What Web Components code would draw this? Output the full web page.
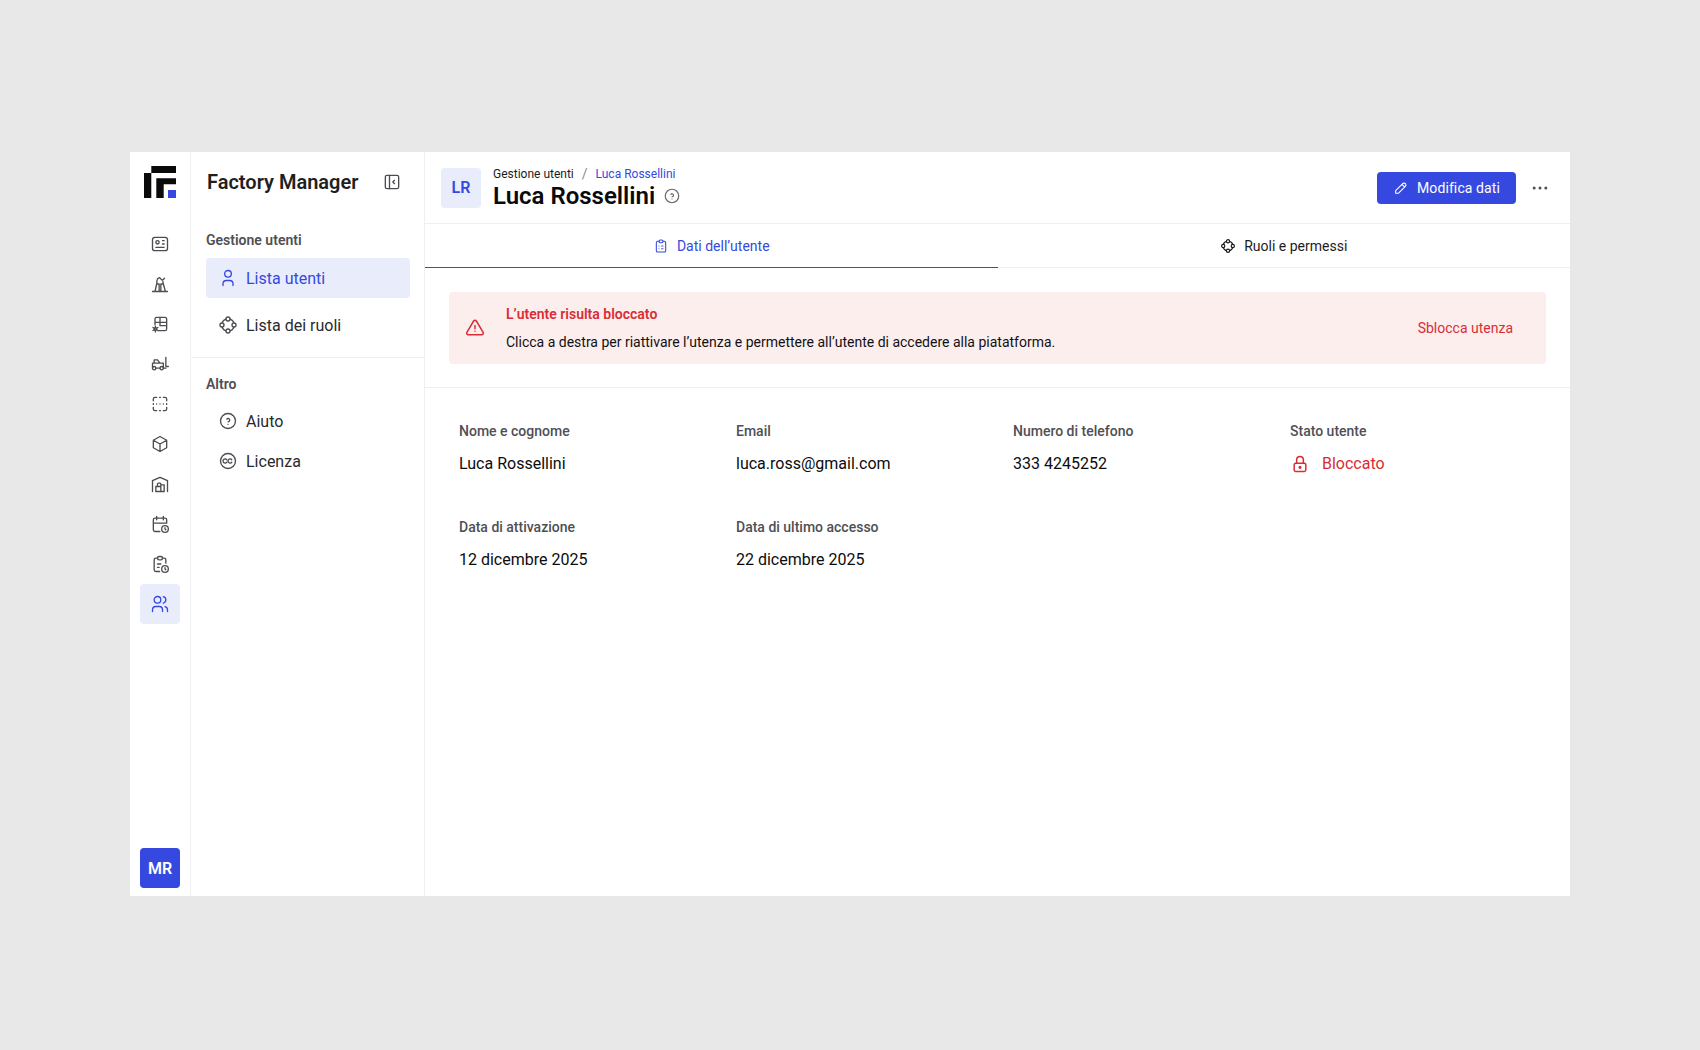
<!DOCTYPE html>
<html lang="it">
<head>
<meta charset="utf-8">
<title>Factory Manager</title>
<style>
  html, body { margin: 0; height: 100%; }
  body {
    background: #e8e8e8;
    font-family: Roboto, "Liberation Sans", sans-serif;
    display: flex;
    align-items: flex-start;
    justify-content: center;
    padding-top: 152px;
    box-sizing: border-box;
  }
</style>
</head>
<body>
<fm-app>
  <fm-rail slot="rail"></fm-rail>
  <fm-sidebar slot="sidebar"></fm-sidebar>
  <fm-user-page slot="main"></fm-user-page>
</fm-app>

<script>
  const BLUE = '#3549e0';

  // tabler-style stroke paths, keyed by name
  const ICONS = {
    id: '<rect x="3" y="4" width="18" height="16" rx="3"/><circle cx="9" cy="10" r="2"/><path d="M15 8h2M15 12h2M7 16h10"/>',
    tower: '<path d="M3 21h18M6 21l2-9h3v9M13 21v-9h3l2.500 9M8 12l.5-5M16 12l-.5-3M9 6c1.500-2 3-2 4 0s2.500 1.500 4.500-1"/>',
    layoutgear: '<path d="M10 20h8a2 2 0 0 0 2-2V6a2 2 0 0 0-2-2H8a2 2 0 0 0-2 2v7M6 10h14M12 4v10M12 14h8"/><circle cx="6.500" cy="18" r="1.500"/><path d="M6.500 14.500v2M6.500 19.500v2M3.500 16.200l1.700 1M7.800 18.800l1.700 1M3.500 19.800l1.700-1M7.800 17.200l1.700-1"/>',
    forklift: '<circle cx="5" cy="17" r="2"/><circle cx="14" cy="17" r="2"/><path d="M7 17h5M3 17v-6h13v6M5 11V7h4l3 4M22 15h-3V4M16 17h3"/>',
    scan: '<path d="M4 8V6a2 2 0 0 1 2-2h2M16 4h2a2 2 0 0 1 2 2v2M20 16v2a2 2 0 0 1-2 2h-2M8 20H6a2 2 0 0 1-2-2v-2M4 11.500v1M20 11.500v1M11.500 4h1M11.500 20h1M8 12h.01M12 12h.01M16 12h.01"/>',
    box: '<path d="M12 3l8 4.500v9L12 21l-8-4.500v-9L12 3M12 12l8-4.500M12 12v9M12 12L4 7.500"/>',
    warehouse: '<path d="M3 21V8l9-4 9 4v13M13 13h4v8H7v-6h6M13 21v-9a1 1 0 0 0-1-1h-2a1 1 0 0 0-1 1v3"/>',
    calendar: '<path d="M11.800 21H6a2 2 0 0 1-2-2V7a2 2 0 0 1 2-2h12a2 2 0 0 1 2 2v4M16 3v4M8 3v4M4 11h16"/><circle cx="18" cy="18" r="4"/><path d="M18 16.500V18l1 1"/>',
    clipclock: '<path d="M9 5H7a2 2 0 0 0-2 2v12a2 2 0 0 0 2 2h4.500M15 5h2a2 2 0 0 1 2 2v4"/><rect x="9" y="3" width="6" height="4" rx="2"/><path d="M9 12h4M9 16h2"/><circle cx="18" cy="18" r="4"/><path d="M18 16.500V18l1 1"/>',
    users: '<circle cx="9" cy="7" r="4"/><path d="M3 21v-2a4 4 0 0 1 4-4h4a4 4 0 0 1 4 4v2M16 3.130a4 4 0 0 1 0 7.750M21 21v-2a4 4 0 0 0-3-3.850"/>',
    collapse: '<rect x="4" y="4" width="16" height="16" rx="2"/><path d="M9 4v16M15 10l-2 2 2 2"/>',
    user: '<circle cx="12" cy="7" r="4"/><path d="M6 21v-2a4 4 0 0 1 4-4h4a4 4 0 0 1 4 4v2"/>',
    roles: '<circle cx="12" cy="12" r="7.500"/><circle cx="12" cy="4.800" r="2.400" fill="#fff"/><circle cx="12" cy="19.200" r="2.400" fill="#fff"/><circle cx="4.800" cy="12" r="2.400" fill="#fff"/><circle cx="19.200" cy="12" r="2.400" fill="#fff"/>',
    help: '<circle cx="12" cy="12" r="9"/><path d="M12 16v.01M12 13a2 2 0 0 0 .914-3.782 1.980 1.980 0 0 0-2.414.483"/>',
    cc: '<circle cx="12" cy="12" r="9"/><path d="M10.500 10.500a2.500 2.500 0 1 0 0 3M16.500 10.500a2.500 2.500 0 1 0 0 3"/>',
    clipboard: '<path d="M9 5H7a2 2 0 0 0-2 2v12a2 2 0 0 0 2 2h10a2 2 0 0 0 2-2V7a2 2 0 0 0-2-2h-2"/><rect x="9" y="3" width="6" height="4" rx="2"/><path d="M9 12h.01M13 12h2M9 16h.01M13 16h2"/>',
    pencil: '<path d="M4 20h4L18.500 9.500a2.828 2.828 0 1 0-4-4L4 16v4M13.500 6.500l4 4"/>',
    alert: '<path d="M12 9v4M10.363 3.591 2.257 17.125a1.914 1.914 0 0 0 1.636 2.871h16.214a1.914 1.914 0 0 0 1.636-2.870L13.637 3.590a1.914 1.914 0 0 0-3.274 0zM12 16h.01"/>',
    lock: '<rect x="5" y="11" width="14" height="10" rx="2"/><circle cx="12" cy="16" r="1"/><path d="M8 11V7a4 4 0 1 1 8 0v4"/>',
    dots: '<circle cx="5" cy="12" r="1"/><circle cx="12" cy="12" r="1"/><circle cx="19" cy="12" r="1"/>'
  };

  class FmIcon extends HTMLElement {
    connectedCallback() {
      const size = this.getAttribute('size') || 24;
      const sw = this.getAttribute('stroke') || 2;
      this.attachShadow({ mode: 'open' }).innerHTML = `
        <style>:host { display: inline-flex; flex: none; } svg { display: block; }</style>
        <svg width="${size}" height="${size}" viewBox="0 0 24 24" fill="none" stroke="currentColor"
             stroke-width="${sw}" stroke-linecap="round" stroke-linejoin="round">${ICONS[this.getAttribute('name')] || ''}</svg>`;
    }
  }
  customElements.define('fm-icon', FmIcon);

  class FmApp extends HTMLElement {
    constructor() {
      super();
      this.attachShadow({ mode: 'open' }).innerHTML = `
        <style>
          :host {
            display: flex;
            width: 1440px;
            height: 744px;
            background: #fff;
            color: #1c1c1e;
          }
        </style>
        <slot name="rail"></slot>
        <slot name="sidebar"></slot>
        <slot name="main"></slot>`;
    }
  }
  customElements.define('fm-app', FmApp);

  class FmRail extends HTMLElement {
    constructor() {
      super();
      const names = ['id', 'tower', 'layoutgear', 'forklift', 'scan', 'box', 'warehouse', 'calendar', 'clipclock'];
      this.attachShadow({ mode: 'open' }).innerHTML = `
        <style>
          :host {
            display: flex;
            flex-direction: column;
            align-items: center;
            box-sizing: border-box;
            width: 61px;
            flex: none;
            padding: 14px 0 8px;
            border-right: 1px solid #efeff1;
            background: #fff;
          }
          .logo { display: block; margin-bottom: 26px; }
          .btn {
            width: 40px;
            height: 40px;
            display: flex;
            align-items: center;
            justify-content: center;
            color: #4c4c52;
            border-radius: 4px;
          }
          .btn.on { background: #e9edfb; color: ${BLUE}; }
          .avatar {
            margin-top: auto;
            width: 40px;
            height: 40px;
            border-radius: 4px;
            background: ${BLUE};
            color: #fff;
            font-weight: 600;
            font-size: 16px;
            display: flex;
            align-items: center;
            justify-content: center;
          }
        </style>
        <svg class="logo" width="32" height="32" viewBox="0 0 32 32">
          <path fill="#0a0a0a" d="M7.300 0H32V7H7.300zM0 7H7.300V32H0zM12.300 12.300H32V18.300H19.700V32H12.300z"/>
          <rect x="24" y="24" width="8" height="8" fill="${BLUE}"/>
        </svg>
        ${names.map(n => `<div class="btn"><fm-icon name="${n}" size="20" stroke="1.600"></fm-icon></div>`).join('')}
        <div class="btn on"><fm-icon name="users" size="20" stroke="1.600"></fm-icon></div>
        <div class="avatar">MR</div>`;
    }
  }
  customElements.define('fm-rail', FmRail);

  class FmNavItem extends HTMLElement {
    constructor() {
      super();
      this.attachShadow({ mode: 'open' }).innerHTML = `
        <style>
          :host {
            display: flex;
            align-items: center;
            gap: 8px;
            height: 40px;
            padding-left: 12px;
            border-radius: 4px;
            font-size: 16px;
            color: #2a2a2e;
          }
          :host([active]) { background: #e9edfb; color: ${BLUE}; }
          fm-icon { color: #4c4c52; }
          :host([active]) fm-icon { color: ${BLUE}; }
        </style>
        <fm-icon name="${this.getAttribute('icon')}" size="20" stroke="1.600"></fm-icon>
        <span><slot></slot></span>`;
    }
  }
  customElements.define('fm-nav-item', FmNavItem);

  class FmSidebar extends HTMLElement {
    constructor() {
      super();
      this.attachShadow({ mode: 'open' }).innerHTML = `
        <style>
          :host {
            display: block;
            box-sizing: border-box;
            width: 234px;
            flex: none;
            border-right: 1px solid #efeff1;
          }
          .top {
            display: flex;
            align-items: center;
            justify-content: space-between;
            height: 60px;
            padding: 0 22px 0 16px;
            font-size: 20px;
            font-weight: 600;
            color: #1f1f23;
          }
          .top fm-icon { color: #4c4c52; }
          .group { padding: 16px 14px 0 15px; }
          .group.first { padding-top: 18px; padding-bottom: 12px; border-bottom: 1px solid #efeff1; }
          h3 {
            margin: 0;
            font-size: 14px;
            font-weight: 600;
            line-height: 20px;
            color: #4f4f55;
          }
          .first h3 { margin-bottom: 8px; }
          .group:not(.first) h3 { margin-bottom: 7px; }
          .first fm-nav-item + fm-nav-item { margin-top: 7px; }
        </style>
        <div class="top">Factory Manager <fm-icon name="collapse" size="20" stroke="1.600"></fm-icon></div>
        <div class="group first">
          <h3>Gestione utenti</h3>
          <fm-nav-item icon="user" active>Lista utenti</fm-nav-item>
          <fm-nav-item icon="roles">Lista dei ruoli</fm-nav-item>
        </div>
        <div class="group">
          <h3>Altro</h3>
          <fm-nav-item icon="help">Aiuto</fm-nav-item>
          <fm-nav-item icon="cc">Licenza</fm-nav-item>
        </div>`;
    }
  }
  customElements.define('fm-sidebar', FmSidebar);

  class FmField extends HTMLElement {
    constructor() {
      super();
      this.attachShadow({ mode: 'open' }).innerHTML = `
        <style>
          :host { display: block; }
          .label {
            font-size: 14px;
            font-weight: 500;
            line-height: 20px;
            color: #4f4f55;
            margin-bottom: 13px;
          }
          .value {
            display: flex;
            align-items: center;
            gap: 12px;
            font-size: 16px;
            line-height: 20px;
            color: #0c0c0e;
          }
          :host([danger]) .value { color: #d92d35; }
        </style>
        <div class="label">${this.getAttribute('label')}</div>
        <div class="value"><slot name="icon"></slot><span><slot></slot></span></div>`;
    }
  }
  customElements.define('fm-field', FmField);

  class FmUserPage extends HTMLElement {
    constructor() {
      super();
      this.attachShadow({ mode: 'open' }).innerHTML = `
        <style>
          :host { display: block; flex: 1; min-width: 0; }
          header {
            display: flex;
            align-items: center;
            height: 71px;
            padding: 0 20px 0 16px;
            border-bottom: 1px solid #efeff1;
          }
          .badge {
            width: 40px;
            height: 40px;
            border-radius: 4px;
            background: #e9edfb;
            color: ${BLUE};
            font-weight: 600;
            font-size: 16px;
            display: flex;
            align-items: center;
            justify-content: center;
            margin-right: 12px;
          }
          .crumbs {
            display: flex;
            align-items: center;
            gap: 8px;
            font-size: 12px;
            line-height: 16px;
            color: #1c1c1e;
          }
          .crumbs i { font-style: normal; color: #8a8a90; font-size: 14px; }
          .crumbs b { font-weight: 400; color: ${BLUE}; }
          .title {
            display: flex;
            align-items: center;
            gap: 8px;
            font-size: 24px;
            line-height: 28px;
            font-weight: 600;
            color: #0a0a0a;
          }
          .title fm-icon { color: #6a6a70; }
          .actions { margin-left: auto; display: flex; align-items: center; gap: 14px; }
          .primary {
            display: flex;
            align-items: center;
            gap: 8px;
            height: 32px;
            padding: 0 16px;
            border-radius: 4px;
            background: ${BLUE};
            color: #fff;
            font-size: 14px;
            letter-spacing: .1px;
          }
          .actions > fm-icon { color: #4c4c52; }
          .tabs { display: flex; height: 43px; border-bottom: 1px solid #efeff1; box-sizing: content-box; }
          .tab {
            flex: 1;
            display: flex;
            align-items: center;
            justify-content: center;
            gap: 8px;
            font-size: 14px;
            color: #1c1c1e;
          }
          .tab.on { color: ${BLUE}; box-shadow: inset 0 -1px 0 ${BLUE}; margin-bottom: -1px; padding-bottom: 1px; }
          .alert-wrap { padding: 24px 24px 23px; border-bottom: 1px solid #efeff1; }
          .alert {
            display: flex;
            align-items: center;
            height: 72px;
            padding: 0 33px 0 16px;
            border-radius: 4px;
            background: #fdeeee;
          }
          .alert fm-icon { color: #d92d35; margin-right: 21px; }
          .alert .t { font-size: 14px; font-weight: 600; line-height: 20px; color: #d92d35; margin-bottom: 8px; }
          .alert .d { font-size: 14px; line-height: 20px; color: #111114; }
          .alert .a { margin-left: auto; font-size: 14px; color: #d92d35; }
          .grid {
            display: grid;
            grid-template-columns: repeat(4, 277px);
            row-gap: 43px;
            padding: 33px 34px;
          }
        </style>
        <header>
          <div class="badge">LR</div>
          <div>
            <div class="crumbs"><span>Gestione utenti</span><i>/</i><b>Luca Rossellini</b></div>
            <div class="title">Luca Rossellini <fm-icon name="help" size="18" stroke="1.600"></fm-icon></div>
          </div>
          <div class="actions">
            <div class="primary"><fm-icon name="pencil" size="16" stroke="1.600"></fm-icon>Modifica dati</div>
            <fm-icon name="dots" size="20" stroke="1.600"></fm-icon>
          </div>
        </header>
        <nav class="tabs">
          <div class="tab on"><fm-icon name="clipboard" size="16" stroke="1.600"></fm-icon>Dati dell’utente</div>
          <div class="tab"><fm-icon name="roles" size="16" stroke="1.800"></fm-icon>Ruoli e permessi</div>
        </nav>
        <div class="alert-wrap">
          <div class="alert">
            <fm-icon name="alert" size="20" stroke="1.800"></fm-icon>
            <div>
              <div class="t">L’utente risulta bloccato</div>
              <div class="d">Clicca a destra per riattivare l’utenza e permettere all’utente di accedere alla piatatforma.</div>
            </div>
            <div class="a">Sblocca utenza</div>
          </div>
        </div>
        <div class="grid">
          <fm-field label="Nome e cognome">Luca Rossellini</fm-field>
          <fm-field label="Email">luca.ross@gmail.com</fm-field>
          <fm-field label="Numero di telefono">333 4245252</fm-field>
          <fm-field label="Stato utente" danger><fm-icon slot="icon" name="lock" size="20" stroke="1.800"></fm-icon>Bloccato</fm-field>
          <fm-field label="Data di attivazione">12 dicembre 2025</fm-field>
          <fm-field label="Data di ultimo accesso">22 dicembre 2025</fm-field>
        </div>`;
    }
  }
  customElements.define('fm-user-page', FmUserPage);
</script>
</body>
</html>
